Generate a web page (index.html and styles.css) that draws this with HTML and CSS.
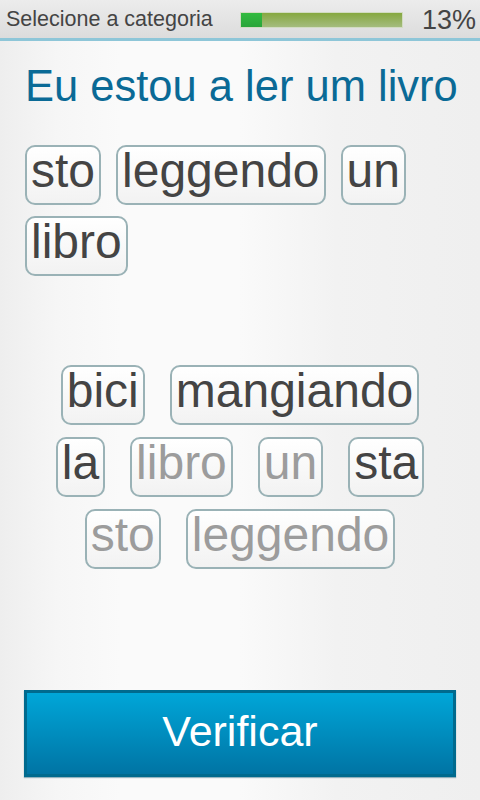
FILE: index.html
```html
<!DOCTYPE html>
<html lang="pt">
<head>
  <meta charset="UTF-8">
  <meta name="viewport" content="width=device-width, initial-scale=1.0">
  <title>Exercício</title>
  <link rel="stylesheet" href="styles.css">
</head>
<body>
  <header class="topbar">
    <span class="topbar-title">Selecione a categoria</span>
    <div class="progress"><div class="progress-fill" style="width: 13%"></div></div>
    <span class="progress-label">13%</span>
  </header>

  <main class="content">
    <h1 class="prompt">Eu estou a ler um livro</h1>

    <div class="answer">
      <span class="chip">sto</span>
      <span class="chip">leggendo</span>
      <span class="chip">un</span>
      <span class="chip">libro</span>
    </div>

    <div class="pool">
      <div class="pool-row">
        <span class="chip">bici</span>
        <span class="chip">mangiando</span>
      </div>
      <div class="pool-row">
        <span class="chip">la</span>
        <span class="chip used">libro</span>
        <span class="chip used">un</span>
        <span class="chip">sta</span>
      </div>
      <div class="pool-row">
        <span class="chip used">sto</span>
        <span class="chip used">leggendo</span>
      </div>
    </div>

    <button class="check-button">Verificar</button>
  </main>
</body>
</html>
```

FILE: styles.css
```css
html, body {
  height: 100%;
}
body {
  margin: 0;
  font-family: "Liberation Sans", Arial, sans-serif;
  background: linear-gradient(to right, #eeeeee 0%, #f6f6f6 12%, #fafafa 25%, #fafafa 50%, #f2f2f2 70%, #efefef 100%);
  color: #444;
  display: flex;
  flex-direction: column;
}
.topbar {
  height: 38px;
  display: flex;
  align-items: center;
  padding: 0 4px 0 6px;
  background: linear-gradient(#ececec, #dcdcdc);
  border-bottom: 3px solid #8ec6d8;
}
.topbar-title {
  font-size: 21.5px;
  color: #444;
  width: 234px;
}
.progress {
  width: 161px;
  height: 14px;
  border: 1px solid #d2dcc2;
  background: linear-gradient(#86a840, #a4bc7e);
  margin-top: 2px;
}
.progress-fill {
  height: 100%;
  background: linear-gradient(#33bb3f, #2aa53a);
}
.progress-label {
  font-size: 27px;
  color: #444;
  margin-left: auto;
  margin-top: 2px;
}
.content {
  flex: 1;
  display: flex;
  flex-direction: column;
  padding: 0 24px 23px;
}
.prompt {
  margin: 20px 0 0 1px;
  font-size: 43.5px;
  font-weight: normal;
  color: #0a6a96;
  line-height: 50px;
  white-space: nowrap;
}
.answer {
  display: flex;
  flex-wrap: wrap;
  gap: 11px 15px;
  margin: 34px 0 0 1px;
  min-height: 131px;
  align-content: flex-start;
}
.chip {
  display: inline-block;
  font-size: 48px;
  line-height: 48px;
  height: 48px;
  padding: 0 4px 8px;
  border: 2px solid #9ab2b6;
  border-radius: 10px;
  background: linear-gradient(#ffffff, #f2f2f2);
  color: #444;
}
.chip.used {
  color: #9c9c9c;
}
.pool {
  display: flex;
  flex-direction: column;
  gap: 12px;
  margin-top: 89px;
}
.pool-row {
  display: flex;
  justify-content: center;
  gap: 25px;
}
.check-button {
  margin-top: auto;
  height: 87px;
  padding-bottom: 6px;
  border: 3px solid #006a8e;
  background: linear-gradient(#00a6d8, #0074a4);
  color: #fff;
  font-family: inherit;
  font-size: 43px;
  box-shadow: 0 1px 1px rgba(0, 80, 110, 0.4);
  cursor: pointer;
}
```
